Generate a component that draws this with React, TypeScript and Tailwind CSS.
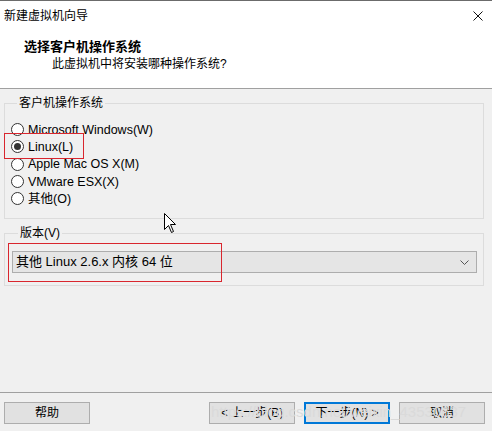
import React from 'react';

const osOptions = [
  { label: 'Microsoft Windows(W)', checked: false },
  { label: 'Linux(L)', checked: true },
  { label: 'Apple Mac OS X(M)', checked: false },
  { label: 'VMware ESX(X)', checked: false },
  { label: '其他(O)', checked: false },
];

function Radio({ checked }: { checked: boolean }) {
  return (
    <span className="w-[13px] h-[13px] rounded-full border border-[#333333] bg-white flex items-center justify-center shrink-0">
      {checked && <span className="w-[7px] h-[7px] rounded-full bg-[#333333]" />}
    </span>
  );
}

function WinButton({ children, primary }: { children: React.ReactNode; primary?: boolean }) {
  return (
    <button
      className={
        'w-[86px] h-[22px] bg-[#e1e1e1] text-[12px] text-black flex items-center justify-center ' +
        (primary ? 'border-2 border-[#0078d7]' : 'border border-[#adadad]')
      }
    >
      {children}
    </button>
  );
}

export default function App() {
  return (
    <div
      className="relative w-[492px] h-[431px] bg-[#f0f0f0] flex flex-col overflow-hidden text-black text-[12px]"
      style={{ fontFamily: '"Liberation Sans", "Noto Sans CJK SC", sans-serif' }}
    >
      {/* title + header */}
      <div className="bg-white border-t border-[#6b6b6b] border-b border-b-[#a0a0a0] h-[89px]">
        <div className="h-[29px] flex items-center justify-between pl-[4px] pr-[9px]">
          <span className="leading-[16px]">新建虚拟机向导</span>
          <svg width="10" height="10" viewBox="0 0 10 10">
            <path d="M0.5 0.5 L9.5 9.5 M9.5 0.5 L0.5 9.5" stroke="#111" strokeWidth="1" fill="none" />
          </svg>
        </div>
        <div className="pt-[9px]">
          <div className="pl-[24px] text-[13px] font-bold leading-[16px]">选择客户机操作系统</div>
          <div className="pl-[52px] leading-[17px] mt-[1px]">此虚拟机中将安装哪种操作系统?</div>
        </div>
      </div>

      {/* guest os group */}
      <fieldset className="ml-[4px] mr-[8px] mt-[6px] border border-[#dcdcdc] pl-[6px] pt-[10px] pb-[11px]">
        <legend className="ml-[6px] px-[2px] leading-[16px]">客户机操作系统</legend>
        {osOptions.map(o => (
          <div key={o.label} className="h-[17.3px] flex items-center gap-[4px]">
            <Radio checked={o.checked} />
            <span className="leading-[16px] text-[12.5px]">{o.label}</span>
          </div>
        ))}
      </fieldset>

      {/* version group */}
      <fieldset className="ml-[4px] mr-[8px] mt-[6px] border border-[#dcdcdc] pl-[7px] pr-[6px] pt-[10px] pb-[12px]">
        <legend className="ml-[6px] px-[2px] leading-[16px]">版本(V)</legend>
        <div className="h-[22px] bg-[#e5e5e5] border border-[#adadad] flex items-center justify-between pl-[3px] pr-[7px]">
          <span className="leading-[16px] text-[13px]">其他 Linux 2.6.x 内核 64 位</span>
          <svg width="9" height="5" viewBox="0 0 9 5">
            <path d="M0.5 0.5 L4.5 4.5 L8.5 0.5" stroke="#555" strokeWidth="1" fill="none" />
          </svg>
        </div>
      </fieldset>

      {/* footer */}
      <div className="mt-auto border-t border-[#a0a0a0] h-[39px] pt-[9px] pl-[4px] pr-[7px] flex items-start justify-between">
        <WinButton>帮助</WinButton>
        <div className="flex gap-[9px]">
          <WinButton>&lt; 上一步(B)</WinButton>
          <WinButton primary>下一步(N) &gt;</WinButton>
          <WinButton>取消</WinButton>
        </div>
      </div>

      {/* annotations */}
      <div className="absolute left-[4px] top-[133px] w-[80px] h-[26px] border border-[#d9262e]" />
      <div className="absolute left-[8px] top-[243px] w-[214px] h-[39px] border border-[#d9262e]" />

      {/* mouse cursor */}
      <svg className="absolute left-[164px] top-[213px]" width="13" height="21" viewBox="0 0 13 21">
        <path d="M0.5 0.5 L0.5 16.5 L4.5 12.5 L7.5 19.5 L9.5 18.5 L6.5 11.5 L11.5 11.5 Z" fill="white" stroke="#000" strokeWidth="1" />
      </svg>

      {/* watermark */}
      <div className="absolute left-[211px] top-[403px] text-[15px] leading-[18px] text-[#dadada] whitespace-nowrap pointer-events-none">
        https://blog.csdn.net/weixin_43530637
      </div>
    </div>
  );
}
